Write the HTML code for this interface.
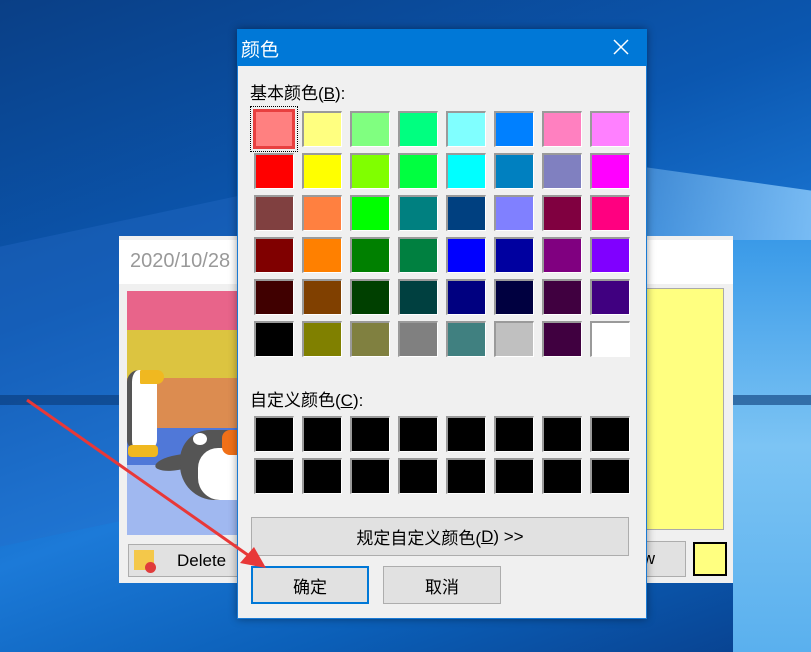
<!DOCTYPE html>
<html><head><meta charset="utf-8"><style>
*{margin:0;padding:0;box-sizing:border-box}
body{width:811px;height:652px;overflow:hidden;position:relative;font-family:"Liberation Sans","Noto Sans CJK SC",sans-serif;
background:linear-gradient(160deg,#0a3f86 0%,#0b57b0 35%,#1c7ad8 60%,#0b5fb8 80%,#083f8c 100%)}
.abs{position:absolute}
.sw{position:absolute;width:40px;height:36px;border-top:2px solid #9a9a9a;border-left:2px solid #9a9a9a;border-right:1px solid #fff;border-bottom:1px solid #fff}
.btn{position:absolute;background:#e1e1e1;border:1px solid #adadad;font-size:17px;color:#000;display:flex;align-items:center;justify-content:center}
</style></head><body>
<div class="abs" style="left:500px;top:170px;width:330px;height:90px;background:linear-gradient(90deg,rgba(120,190,255,0),rgba(150,210,255,.8));transform:skewY(8deg)"></div>
<div class="abs" style="left:0;top:220px;width:250px;height:300px;background:rgba(40,110,200,.35);transform:skewY(-12deg)"></div>
<div class="abs" style="left:733px;top:240px;width:78px;height:412px;background:linear-gradient(180deg,#3a9ae8,#7cc4f4,#5ab0ee)"></div>
<div class="abs" style="left:0;top:395px;width:811px;height:10px;background:#0a3a78;opacity:.6"></div>

<div class="abs" style="left:119px;top:236px;width:614px;height:347px;background:#f0f0f0"></div>
<div class="abs" style="left:119px;top:240px;width:614px;height:44px;background:#fff"></div>
<div class="abs" style="left:130px;top:250px;font-size:20px;color:#999">2020/10/28</div>
<div class="abs" style="left:127px;top:291px;width:110px;height:244px;background:#a0b8f0">
 <div style="height:39px;background:#e8648a"></div>
 <div style="height:48px;background:#dcc440"></div>
 <div style="height:50px;background:#dc8c50"></div>
 <div style="height:37px;background:#5078d8"></div>
</div>
<div class="abs" style="left:127px;top:370px;width:30px;height:80px;background:#fff;border-radius:12px 14px 10px 10px;border-left:5px solid #555"></div>
<div class="abs" style="left:140px;top:370px;width:24px;height:14px;background:#f0b820;border-radius:2px 10px 10px 2px"></div>
<div class="abs" style="left:128px;top:445px;width:30px;height:12px;background:#f0b820;border-radius:4px"></div>
<div class="abs" style="left:155px;top:455px;width:45px;height:15px;background:#555;border-radius:50%;transform:rotate(-10deg)"></div>
<div class="abs" style="left:180px;top:430px;width:58px;height:70px;background:#555;border-radius:30px 0 0 35px"></div>
<div class="abs" style="left:198px;top:448px;width:40px;height:52px;background:#fff;border-radius:20px 0 0 22px"></div>
<div class="abs" style="left:193px;top:433px;width:14px;height:12px;background:#fff;border-radius:50%"></div>
<div class="abs" style="left:222px;top:430px;width:15px;height:25px;background:#f07018;border-radius:8px 0 0 8px"></div>
<div class="btn" style="left:128px;top:544px;width:110px;height:33px;justify-content:flex-start;padding-left:48px">Delete</div>
<div class="abs" style="left:134px;top:550px;width:20px;height:20px;background:#f4c84a"></div>
<div class="abs" style="left:145px;top:562px;width:11px;height:11px;background:#e03c3c;border-radius:50%"></div>
<div class="abs" style="left:647px;top:288px;width:77px;height:242px;background:#ffff80;border:1px solid #aaa;border-left:none"></div>
<div class="btn" style="left:620px;top:541px;width:66px;height:36px;justify-content:flex-end;padding-right:30px">w</div>
<div class="abs" style="left:693px;top:542px;width:34px;height:34px;background:#ffff80;border:2px solid #000"></div>

<div class="abs" style="left:237px;top:29px;width:410px;height:590px;background:#f0f0f0;border:1px solid #1a7ad4;box-shadow:0 0 8px rgba(0,0,0,.4)"></div>
<div class="abs" style="left:237px;top:29px;width:410px;height:37px;background:#0078d7"></div>
<div class="abs" style="left:241px;top:35px;font-size:19px;color:#fff">颜色</div>
<svg class="abs" style="left:612px;top:38px" width="18" height="18"><path d="M2 2L16 16M16 2L2 16" stroke="#fff" stroke-width="1.5"/></svg>
<div class="abs" style="left:250px;top:79px;font-size:17px">基本颜色(<u>B</u>):</div>
<div class="abs" style="left:250px;top:386px;font-size:17px">自定义颜色(<u>C</u>):</div>
<div id="g"></div>
<div class="abs" style="left:250px;top:106px;width:48px;height:46px;border:1px dotted #000"></div>
<div class="abs" style="left:253px;top:109px;width:42px;height:40px;border:3px solid #e84040;background:#ff8080"></div>
<div class="btn" style="left:251px;top:517px;width:378px;height:39px">规定自定义颜色(<u>D</u>) &gt;&gt;</div>
<div class="btn" style="left:251px;top:566px;width:118px;height:38px;border:2px solid #0078d7">确定</div>
<div class="btn" style="left:383px;top:566px;width:118px;height:38px">取消</div>

<svg class="abs" style="left:0;top:0" width="811" height="652"><line x1="27" y1="400" x2="255" y2="560" stroke="#e83838" stroke-width="3"/><path d="M266 568L240 563L254 547Z" fill="#e83838"/></svg>
<script>
var c=["#ff8080","#ffff80","#80ff80","#00ff80","#80ffff","#0080ff","#ff80c0","#ff80ff",
"#ff0000","#ffff00","#80ff00","#00ff40","#00ffff","#0080c0","#8080c0","#ff00ff",
"#804040","#ff8040","#00ff00","#008080","#004080","#8080ff","#800040","#ff0080",
"#800000","#ff8000","#008000","#008040","#0000ff","#0000a0","#800080","#8000ff",
"#400000","#804000","#004000","#004040","#000080","#000040","#400040","#400080",
"#000000","#808000","#808040","#808080","#408080","#c0c0c0","#400040","#ffffff"];
var h="";
for(var i=0;i<48;i++){if(i==0)continue;var x=254+48*(i%8),y=111+42*Math.floor(i/8);h+='<div class="sw" style="left:'+x+'px;top:'+y+'px;background:'+c[i]+'"></div>';}
for(var i=0;i<16;i++){var x=254+48*(i%8),y=416+42*Math.floor(i/8);h+='<div class="sw" style="left:'+x+'px;top:'+y+'px;background:#000"></div>';}
document.getElementById("g").innerHTML=h;
</script>
</body></html>
